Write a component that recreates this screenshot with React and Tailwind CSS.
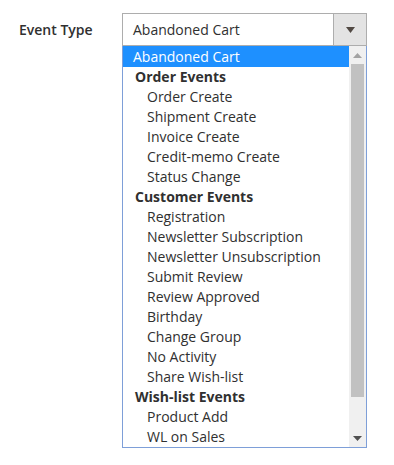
import React from "react";

const groups = [
  { type: "sel", label: "Abandoned Cart" },
  { type: "grp", label: "Order Events" },
  { type: "opt", label: "Order Create" },
  { type: "opt", label: "Shipment Create" },
  { type: "opt", label: "Invoice Create" },
  { type: "opt", label: "Credit-memo Create" },
  { type: "opt", label: "Status Change" },
  { type: "grp", label: "Customer Events" },
  { type: "opt", label: "Registration" },
  { type: "opt", label: "Newsletter Subscription" },
  { type: "opt", label: "Newsletter Unsubscription" },
  { type: "opt", label: "Submit Review" },
  { type: "opt", label: "Review Approved" },
  { type: "opt", label: "Birthday" },
  { type: "opt", label: "Change Group" },
  { type: "opt", label: "No Activity" },
  { type: "opt", label: "Share Wish-list" },
  { type: "grp", label: "Wish-list Events" },
  { type: "opt", label: "Product Add" },
  { type: "opt", label: "WL on Sales" },
];

function Row({ item }) {
  if (item.type === "sel") {
    return (
      <div className="h-[21px] leading-[22px] pl-[10px] bg-[#1e90ff] text-white whitespace-nowrap">
        {item.label}
      </div>
    );
  }
  if (item.type === "grp") {
    return (
      <div className="h-[20px] leading-[20px] pl-[12px] font-bold text-[#303030] whitespace-nowrap">
        {item.label}
      </div>
    );
  }
  return (
    <div className="h-[20px] leading-[20px] pl-[24px] text-[#303030] whitespace-nowrap">
      {item.label}
    </div>
  );
}

export default function App() {
  return (
    <div
      className="w-[394px] h-[465px] bg-white text-[14px]"
      style={{ fontFamily: '"Open Sans", sans-serif' }}
    >
      <div className="flex pl-[19px] pt-[13px]">
        <div className="w-[103px] h-[33px] leading-[33px] font-semibold text-[#303030]">
          Event Type
        </div>
        <div className="w-[245px] flex flex-col">
          <div className="h-[33px] border border-[#adadad] flex bg-white">
            <div className="flex-1 leading-[31px] pl-[10px] text-[#303030]">
              Abandoned Cart
            </div>
            <div className="w-[33px] border-l border-[#adadad] bg-[#e3e3e3] flex items-center justify-center">
              <svg width="9" height="6" viewBox="0 0 9 6">
                <polygon points="0,0 9,0 4.5,6" fill="#514943" />
              </svg>
            </div>
          </div>
          <div className="h-[402px] border-x border-b border-[#7e9fd8] flex">
            <div className="flex-1 flex flex-col">
              {groups.map((g, i) => (
                <Row key={i} item={g} />
              ))}
            </div>
            <div className="w-[17px] bg-[#f0f0f0] flex flex-col items-center">
              <div className="h-[18px] flex items-center justify-center">
                <svg width="9" height="5" viewBox="0 0 9 5">
                  <polygon points="0,5 9,5 4.5,0" fill="#a3a3a3" />
                </svg>
              </div>
              <div className="w-[13px] h-[333px] bg-[#c1c1c1]" />
              <div className="flex-1" />
              <div className="h-[18px] flex items-center justify-center">
                <svg width="9" height="5" viewBox="0 0 9 5">
                  <polygon points="0,0 9,0 4.5,5" fill="#505050" />
                </svg>
              </div>
            </div>
          </div>
        </div>
      </div>
    </div>
  );
}
